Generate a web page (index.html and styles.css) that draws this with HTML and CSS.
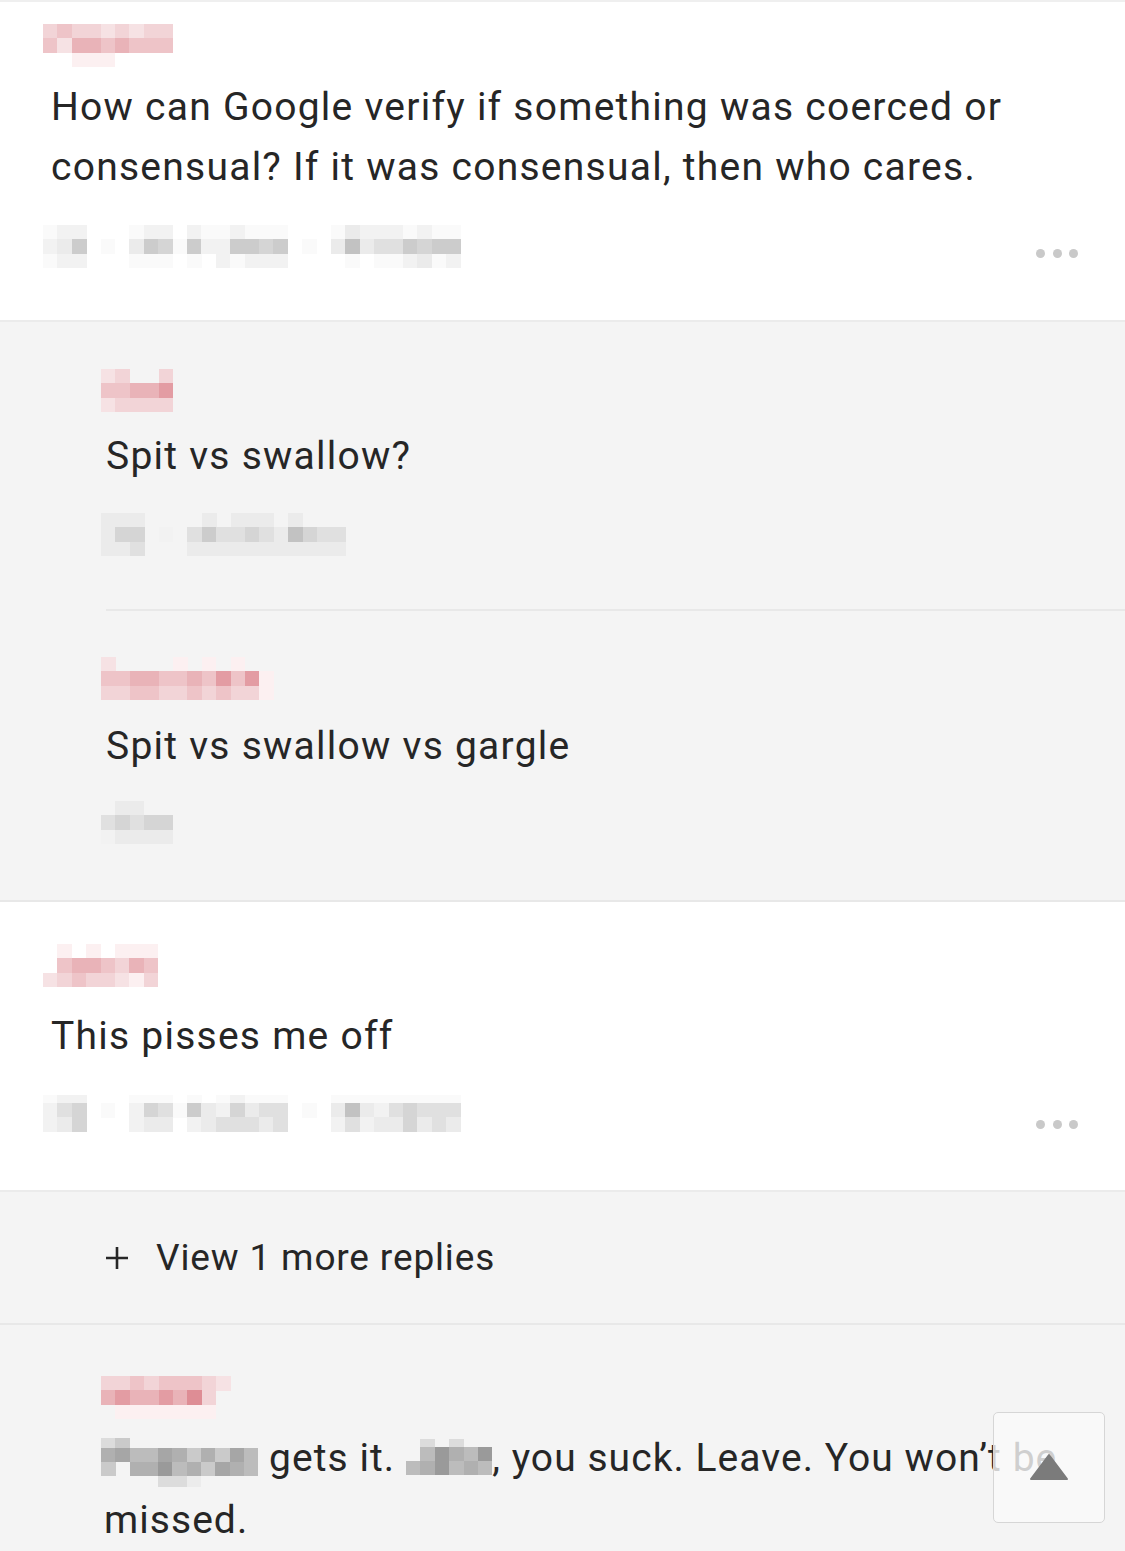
FILE: index.html
```html
<!DOCTYPE html>
<html lang="en">
<head>
<meta charset="utf-8">
<title>Comments</title>
<link rel="stylesheet" href="styles.css">
</head>
<body>
<div class="page">
  <div class="top-rule"></div>

  <section class="comment comment-first">
    <div class="mosaic" data-pal="p" data-cw="14.4" data-map="343323233|425545444|001110000"></div>
    <p class="text">How can Google verify if something was coerced or consensual? If it was consensual, then who cares.</p>
    <div class="meta">
      <div class="mosaic" data-pal="g" data-cw="14.4" data-map="12200012202112111000132221211|23601036516226656010373446566|12200011101021222000010112312"></div>
      <div class="dots"><span></span><span></span><span></span></div>
    </div>
  </section>

  <section class="replies">
    <div class="reply reply-first">
      <div class="mosaic" data-pal="p" data-cw="14.4" data-map="23003|44556|23333"></div>
      <p class="text">Spit vs swallow?</p>
      <div class="meta">
        <div class="mosaic" data-pal="g" data-cw="14.4" data-map="33300003033303000|35502046445437544|33400033333333333"></div>
      </div>
    </div>
    <div class="divider"></div>
    <div class="reply reply-second">
      <div class="mosaic" data-pal="p" data-cw="14.4" data-map="200001010100|445544546461|334433434331"></div>
      <p class="text">Spit vs swallow vs gargle</p>
      <div class="meta">
        <div class="mosaic" data-pal="g" data-cw="14.4" data-map="03300|45455|23333"></div>
      </div>
    </div>
  </section>

  <section class="comment comment-second">
    <div class="mosaic" data-pal="p" data-cw="14.4" data-map="01010111|04554354|23433213"></div>
    <p class="text">This pisses me off</p>
    <div class="meta">
      <div class="mosaic" data-pal="g" data-cw="14.4" data-rh="8,14.4,14.4" data-map="12200011101012111000111111111|24501025416325344010373245444|23500023302344434000242335343"></div>
      <div class="dots"><span></span><span></span><span></span></div>
    </div>
  </section>

  <section class="more">
    <svg class="plus" width="22" height="22" viewBox="0 0 22 22" aria-hidden="true"><path d="M11 0v22M0 11h22" stroke="#262626" stroke-width="2.6" fill="none"/></svg>
    <span class="more-label">View 1 more replies</span>
  </section>

  <section class="replies replies-last">
    <div class="reply reply-last">
      <div class="mosaic" data-pal="p" data-cw="14.4" data-map="334344432|565565730|011111110"></div>
      <p class="text text-last"><span class="mosaic inline inline-a" data-pal="d" data-cw="14.3" data-rh="10,14,14,11" data-map="23000000000|56446535364|30557453654|00002210000"></span> gets it. <span class="mosaic inline inline-b" data-pal="d" data-cw="14.4" data-rh="8,14,14,9" data-map="020200|047547|457454|000000"></span>, you suck. Leave. You won’t be missed.</p>
    </div>
  </section>

  <button class="to-top" type="button" aria-label="Back to top">
    <svg width="40" height="28" viewBox="0 0 40 28" aria-hidden="true"><path d="M20 2 L38 26 L2 26 Z" fill="#7b7b7b" stroke="#7b7b7b" stroke-width="2" stroke-linejoin="round"/></svg>
  </button>
</div>
<script src="mosaic.js"></script>
</body>
</html>
```

FILE: styles.css
```css
* { box-sizing: border-box; }

html, body {
  margin: 0;
  padding: 0;
}

body {
  width: 1125px;
  height: 1551px;
  overflow: hidden;
  background: #f4f4f4;
}

.page {
  position: relative;
  width: 1125px;
  height: 1551px;
  overflow: hidden;
  font-family: Roboto, "Noto Sans", "Liberation Sans", Arial, sans-serif;
  color: #262626;
}

.top-rule {
  height: 2px;
  background: #efefef;
}

.mosaic {
  display: block;
}

.mosaic svg {
  display: block;
}

.mosaic.inline {
  display: inline-block;
  text-indent: 0;
}

.inline-a { vertical-align: -16px; }
.inline-b { vertical-align: -13px; }

.text {
  margin: 0;
  font-size: 39px;
  line-height: 60px;
  font-weight: 400;
  letter-spacing: 1.25px;
}

.meta {
  display: flex;
  justify-content: space-between;
  align-items: flex-start;
}

.dots {
  display: flex;
  gap: 7.5px;
}

.dots span {
  width: 9px;
  height: 9px;
  border-radius: 50%;
  background: #c9c9c9;
}

/* White top-level comments */
.comment {
  background: #ffffff;
  padding-left: 43px;
  padding-right: 47px;
  border-bottom: 2px solid #ebebeb;
}

.comment .text {
  padding-left: 8px;
}

.comment-first {
  padding-top: 22px;
  padding-bottom: 51.8px;
}

.comment-first .text { margin-top: 9.5px; }
.comment-first .meta { margin-top: 28.3px; }
.comment-first .dots { margin-top: 24.5px; }

.comment-second {
  padding-top: 42px;
  padding-bottom: 58.2px;
}

.comment-second .text { margin-top: 18.5px; }
.comment-second .meta { margin-top: 29.3px; }
.comment-second .dots { margin-top: 25px; }

/* Grey reply threads */
.replies {
  background: #f4f4f4;
  padding-left: 101px;
  border-bottom: 2px solid #e8e8e8;
}

.reply .text {
  padding-left: 5px;
}

.reply-first {
  padding-top: 47px;
  padding-bottom: 52.8px;
}

.reply-first .text { margin-top: 13.5px; }
.reply-first .meta { margin-top: 27.3px; }

.divider {
  margin-left: 5px;
  height: 2px;
  background: #e8e8e8;
}

.reply-second {
  padding-top: 46px;
  padding-bottom: 56.1px;
}

.reply-second .text { margin-top: 15.5px; }
.reply-second .meta { margin-top: 25px; }

.more {
  height: 133px;
  background: #f4f4f4;
  border-bottom: 2px solid #e8e8e8;
  display: flex;
  align-items: center;
  gap: 28px;
  padding-left: 106px;
}

.plus {
  display: block;
  flex: none;
  margin-top: 2px;
}

.more-label {
  font-size: 37px;
  line-height: 44px;
  letter-spacing: 0.85px;
  margin-top: 2px;
}

.replies-last {
  border-bottom: none;
  padding-right: 47px;
  padding-left: 0;
}

.reply-last {
  padding-top: 51px;
  padding-left: 101px;
}

.text-last {
  margin-top: 8.2px;
  line-height: 62px;
  text-indent: -3px;
  letter-spacing: 1.05px;
}

.reply-last .text-last { padding-left: 3px; }

.to-top {
  position: absolute;
  left: 993px;
  top: 1412px;
  width: 112px;
  height: 111px;
  padding: 0;
  margin: 0;
  background: rgba(250, 250, 250, 0.8);
  border: 1.5px solid #d6d6d6;
  border-radius: 5px;
  display: flex;
  align-items: center;
  justify-content: center;
}

.to-top svg {
  display: block;
  margin-top: -2px;
}
```

FILE: mosaic.js
```js
(function () {
  var palettes = {
    p: ['transparent', '#fcf0f1', '#f6e2e4', '#f2d4d7', '#eec4c8', '#e9b3b8', '#e39ca3', '#de8d95'],
    g: ['transparent', '#fafafa', '#f2f2f2', '#ebebeb', '#e0e0e0', '#d5d5d5', '#cccccc', '#c2c2c2'],
    d: ['transparent', '#ececec', '#dcdcdc', '#cacaca', '#bcbcbc', '#b0b0b0', '#a6a6a6', '#9a9a9a']
  };
  var NS = 'http://www.w3.org/2000/svg';
  var nodes = document.querySelectorAll('.mosaic');
  nodes.forEach(function (el) {
    var rows = el.getAttribute('data-map').split('|');
    var pal = palettes[el.getAttribute('data-pal')] || palettes.g;
    var cw = parseFloat(el.getAttribute('data-cw') || '14.4');
    var rhAttr = el.getAttribute('data-rh');
    var rh = rhAttr ? rhAttr.split(',').map(parseFloat) : rows.map(function () { return cw; });
    var cols = rows[0].length;
    var width = cols * cw;
    var height = rh.reduce(function (a, b) { return a + b; }, 0);
    var svg = document.createElementNS(NS, 'svg');
    svg.setAttribute('width', width);
    svg.setAttribute('height', height);
    svg.setAttribute('viewBox', '0 0 ' + width + ' ' + height);
    svg.setAttribute('shape-rendering', 'crispEdges');
    svg.setAttribute('aria-hidden', 'true');
    var y = 0;
    rows.forEach(function (row, r) {
      for (var c = 0; c < row.length; c++) {
        var v = parseInt(row.charAt(c), 10);
        if (!v) continue;
        var rect = document.createElementNS(NS, 'rect');
        rect.setAttribute('x', (c * cw).toFixed(2));
        rect.setAttribute('y', y.toFixed(2));
        rect.setAttribute('width', (cw + 0.3).toFixed(2));
        rect.setAttribute('height', (rh[r] + 0.3).toFixed(2));
        rect.setAttribute('fill', pal[v]);
        svg.appendChild(rect);
      }
      y += rh[r];
    });
    el.appendChild(svg);
  });
})();
```
